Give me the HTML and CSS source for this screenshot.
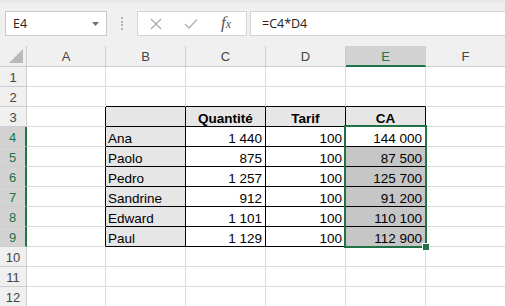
FILE: index.html
```html
<!DOCTYPE html>
<html lang="fr">
  <head>
    <meta charset="UTF-8" />
    <title>Classeur - CA</title>
    <link rel="stylesheet" href="styles.css">
  </head>
  <body>
    <div class="formula-bar">
      <div class="namebox">
        <span>E4</span>
        <svg class="drop" width="7" height="4" viewBox="0 0 7 4"><path d="M0 0h7L3.5 4z" fill="#707070"/></svg>
      </div>
      <div class="grip">
        <svg width="2" height="13" viewBox="0 0 2 13"><g fill="#b4b4b4"><rect y="0" width="2" height="2"/><rect y="4" width="2" height="2"/><rect y="7" width="2" height="2"/><rect y="11" width="2" height="2"/></g></svg>
      </div>
      <div class="fx-buttons">
        <svg class="btn-cancel" width="12" height="12" viewBox="0 0 12 12"><path d="M1 1l10 10M11 1L1 11" stroke="#ababab" stroke-width="1.3"/></svg>
        <svg class="btn-enter" width="14" height="10" viewBox="0 0 14 10"><path d="M1 5l4 4 8-8.5" stroke="#b0b0b0" stroke-width="1.3" fill="none"/></svg>
        <span class="fx">f<span>x</span></span>
      </div>
      <div class="formula">=C4*D4</div>
    </div>

    <div class="sheet">
      <div class="grid">
        <div class="hd corner"><svg width="14" height="14" viewBox="0 0 14 14"><path d="M14 0v14H0z" fill="#b9b9b9"/></svg></div>
        <div class="hd col">A</div>
        <div class="hd col">B</div>
        <div class="hd col">C</div>
        <div class="hd col">D</div>
        <div class="hd col sel">E</div>
        <div class="hd col">F</div>

        <div class="hd row">1</div>
        <div class="c"></div><div class="c"></div><div class="c"></div><div class="c"></div><div class="c"></div><div class="c"></div>

        <div class="hd row">2</div>
        <div class="c"></div><div class="c top"></div><div class="c top"></div><div class="c top"></div><div class="c top"></div><div class="c"></div>

        <div class="hd row">3</div>
        <div class="c left"></div>
        <div class="c t fill"></div>
        <div class="c t fill head">Quantité</div>
        <div class="c t fill head">Tarif</div>
        <div class="c t fill head">CA</div>
        <div class="c"></div>

        <div class="hd row sel">4</div>
        <div class="c left"></div>
        <div class="c t fill">Ana</div>
        <div class="c t num">1 440</div>
        <div class="c t num">100</div>
        <div class="c t num">144 000</div>
        <div class="c"></div>

        <div class="hd row sel">5</div>
        <div class="c left"></div>
        <div class="c t fill">Paolo</div>
        <div class="c t num">875</div>
        <div class="c t num">100</div>
        <div class="c t num picked">87 500</div>
        <div class="c"></div>

        <div class="hd row sel">6</div>
        <div class="c left"></div>
        <div class="c t fill">Pedro</div>
        <div class="c t num">1 257</div>
        <div class="c t num">100</div>
        <div class="c t num picked">125 700</div>
        <div class="c"></div>

        <div class="hd row sel">7</div>
        <div class="c left"></div>
        <div class="c t fill">Sandrine</div>
        <div class="c t num">912</div>
        <div class="c t num">100</div>
        <div class="c t num picked">91 200</div>
        <div class="c"></div>

        <div class="hd row sel">8</div>
        <div class="c left"></div>
        <div class="c t fill">Edward</div>
        <div class="c t num">1 101</div>
        <div class="c t num">100</div>
        <div class="c t num picked">110 100</div>
        <div class="c"></div>

        <div class="hd row sel">9</div>
        <div class="c left"></div>
        <div class="c t fill">Paul</div>
        <div class="c t num">1 129</div>
        <div class="c t num">100</div>
        <div class="c t num picked">112 900</div>
        <div class="c"></div>

        <div class="hd row">10</div>
        <div class="c"></div><div class="c"></div><div class="c"></div><div class="c"></div><div class="c"></div><div class="c"></div>

        <div class="hd row">11</div>
        <div class="c"></div><div class="c"></div><div class="c"></div><div class="c"></div><div class="c"></div><div class="c"></div>

        <div class="hd row">12</div>
        <div class="c"></div><div class="c"></div><div class="c"></div><div class="c"></div><div class="c"></div><div class="c"></div>
      </div>
      <div class="selection"><div class="handle"></div></div>
    </div>
  </body>
</html>
```

FILE: styles.css
```css
body {
  margin: 0;
  width: 505px;
  height: 306px;
  overflow: hidden;
  background: #fff;
  font-family: "Liberation Sans", Arial, sans-serif;
}

/* formula bar */
.formula-bar {
  display: flex;
  align-items: flex-start;
  height: 46px;
  box-sizing: border-box;
  padding: 11px 0 0 5px;
  background: linear-gradient(#e4e4e4 0, #f0f0f0 4px);
  font-family: "Open Sans", sans-serif;
  font-size: 12.5px;
  color: #222;
}
.namebox {
  position: relative;
  width: 102px;
  height: 25px;
  box-sizing: border-box;
  border: 1px solid #c9c9c9;
  background: #fff;
  padding-left: 7px;
  line-height: 23px;
}
.namebox .drop {
  position: absolute;
  right: 7px;
  top: 10px;
}
.grip {
  width: 30px;
  height: 25px;
  display: flex;
  justify-content: center;
  align-items: center;
}
.fx-buttons {
  position: relative;
  width: 110px;
  height: 25px;
  box-sizing: border-box;
  border: 1px solid #d4d4d4;
  background: #fff;
  display: flex;
  align-items: center;
}
.btn-cancel {
  margin-left: 12px;
}
.btn-enter {
  margin-left: 22px;
}
.fx {
  margin-left: 23px;
  font-family: "Liberation Serif", serif;
  font-style: italic;
  font-size: 17px;
  line-height: 20px;
  color: #555;
}
.fx span {
  font-size: 12px;
}
.formula {
  flex: 1;
  margin-left: 3px;
  margin-right: -5px;
  height: 25px;
  box-sizing: border-box;
  border: 1px solid #d4d4d4;
  background: #fff;
  padding-left: 11px;
  line-height: 23px;
}

/* sheet grid */
.sheet {
  position: relative;
}
.grid {
  display: grid;
  grid-template-columns: 27px 79px repeat(5, 80px);
  grid-template-rows: 21px;
  grid-auto-rows: 20px;
}
.grid > div {
  box-sizing: border-box;
  border-right: 1px solid #dadada;
  border-bottom: 1px solid #dadada;
  overflow: hidden;
  white-space: nowrap;
}
.hd {
  background: #f0f0f0;
  color: #444;
  font-size: 13px;
  text-align: center;
}
.grid > .hd {
  border-color: #cdcdcd;
}
.hd.col {
  line-height: 21px;
}
.hd.row {
  line-height: 19px;
  padding-top: 1px;
}
.corner {
  display: flex;
  align-items: flex-end;
  justify-content: flex-end;
  padding: 0 3px 3px 0;
}
.grid > .hd.sel {
  background: #d3d3d3;
  color: #217346;
}
.grid > .hd.col.sel {
  border-bottom: 2px solid #217346;
}
.grid > .hd.row.sel {
  border-right: 2px solid #217346;
}

.c {
  font-size: 13.5px;
  color: #000;
  line-height: 19px;
  padding: 2px 2px 0;
}
.grid > .top {
  border-bottom-color: #000;
}
.grid > .left {
  border-right-color: #000;
}
.grid > .t {
  border-color: #000;
}
.fill {
  background: #e7e6e6;
}
.head {
  font-weight: bold;
  text-align: center;
}
.num {
  text-align: right;
  padding-right: 3px;
}
.picked {
  background: #c6c6c6;
}

.selection {
  position: absolute;
  left: 344px;
  top: 79px;
  width: 83px;
  height: 123px;
  box-sizing: border-box;
  border: 2px solid #217346;
}
.handle {
  position: absolute;
  right: -5px;
  bottom: -5px;
  width: 6px;
  height: 6px;
  background: #217346;
  border: 1px solid #fff;
}
```
